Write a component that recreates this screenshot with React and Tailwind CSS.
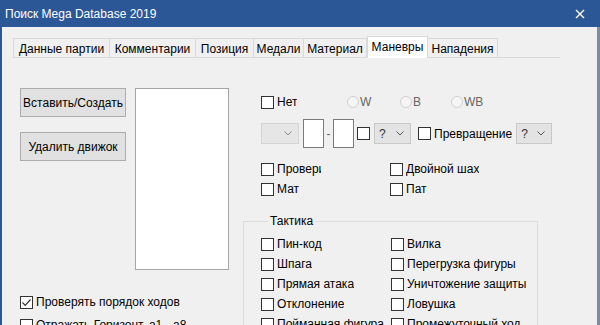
import clsx from 'clsx'

const tabs = [
  { label: 'Данные партии', w: 'w-[97px]' },
  { label: 'Комментарии', w: 'w-[87px]' },
  { label: 'Позиция', w: 'w-[59px]' },
  { label: 'Медали', w: 'w-[51px]' },
  { label: 'Материал', w: 'w-[64px]' },
  { label: 'Маневры', w: 'w-[61px]', active: true },
  { label: 'Нападения', w: 'w-[71px]' },
]

const tactics = [
  ['Пин-код', 'Вилка'],
  ['Шпага', 'Перегрузка фигуры'],
  ['Прямая атака', 'Уничтожение защиты'],
  ['Отклонение', 'Ловушка'],
  ['Пойманная фигура', 'Промежуточный ход'],
]

function Box({ checked }) {
  return (
    <span className="flex h-[13px] w-[13px] shrink-0 items-center justify-center border border-[#333333] bg-white">
      {checked && (
        <svg width="11" height="11" viewBox="0 0 11 11">
          <path d="M1.5 5.5 L4.2 8.3 L9.5 2.5" fill="none" stroke="#333" strokeWidth="1.2" />
        </svg>
      )}
    </span>
  )
}

function Check({ label, checked, className, labelClass }) {
  return (
    <div className={clsx('flex h-[20px] items-center', className)}>
      <Box checked={checked} />
      <span className={clsx('ml-[3px] overflow-hidden whitespace-nowrap', labelClass)}>{label}</span>
    </div>
  )
}

function Radio({ label, className }) {
  return (
    <div className={clsx('flex h-[20px] items-center', className)}>
      <span className="h-[12px] w-[12px] rounded-full border border-[#d2d2d2] bg-[#f5f5f5]" />
      <span className="ml-[1px] text-[#666666]">{label}</span>
    </div>
  )
}

function Chevron({ color = '#333' }) {
  return (
    <svg width="8" height="5" viewBox="0 0 8 5">
      <path d="M0.5 0.5 L4 4 L7.5 0.5" fill="none" stroke={color} strokeWidth="1" />
    </svg>
  )
}

function Combo({ value, disabled, className }) {
  return (
    <div
      className={clsx(
        'flex h-[21px] items-center justify-between border pl-[4px] pr-[6px]',
        disabled ? 'border-[#d4d4d4] bg-[#e6e6e6]' : 'border-[#c8c8c8] bg-[#e3e3e3]',
        className
      )}
    >
      <span className="text-[#333]">{value}</span>
      <Chevron color={disabled ? '#8a8a8a' : '#555'} />
    </div>
  )
}

export default function App() {
  return (
    <div className="flex h-[325px] w-[600px] flex-col overflow-hidden bg-[#f0f0f0] font-['Liberation_Sans',Arial,sans-serif] text-[12px] leading-[16px] text-black">
      {/* Заголовок окна */}
      <div className="flex h-[27px] shrink-0 items-center justify-between bg-[#2b5797] pl-[5px] pr-[15px] text-white">
        <span>Поиск Mega Database 2019</span>
        <svg width="10" height="10" viewBox="0 0 10 10">
          <path d="M1 1 L9 9 M9 1 L1 9" stroke="#fff" strokeWidth="1.4" />
        </svg>
      </div>

      <div className="flex-1 border-l-2 border-r-[3px] border-l-[#2b5797] border-r-[#7b8ca5] pl-[11px] pt-[9px]">
        {/* Вкладки */}
        <div className="flex h-[22px] w-[547px] items-end">
          {tabs.map((t) => (
            <div
              key={t.label}
              className={clsx(
                'flex items-center justify-center border border-[#d9d9d9] whitespace-nowrap',
                t.w,
                t.active ? 'h-[22px] border-b-white bg-white' : 'h-[20px] -ml-px first:ml-0 bg-[#f0f0f0] pt-[1px]'
              )}
            >
              {t.label}
            </div>
          ))}
          <div className="flex-1 border-b border-[#d9d9d9]" />
        </div>

        <div className="flex">
          {/* Левая колонка */}
          <div className="w-[230px] shrink-0 pl-[7px] pt-[30px]">
            <div className="flex gap-[9px]">
              <div className="flex w-[106px] flex-col gap-[15px]">
                <button className="h-[29px] border border-[#adadad] bg-[#e1e1e1]">Вставить/Создать</button>
                <button className="h-[29px] border border-[#adadad] bg-[#e1e1e1]">Удалить движок</button>
              </div>
              <div className="h-[182px] w-[94px] border border-[#a5a5a5] bg-white" />
            </div>
            <div className="mt-[22px] flex flex-col gap-[3px]">
              <Check label="Проверять порядок ходов" checked />
              <Check label="Отражать Горизонт. а1 - а8" />
            </div>
          </div>

          {/* Правая колонка */}
          <div className="pt-[34px]">
            <div className="pl-[18px]">
              <div className="flex h-[20px] items-center">
                <Check label="Нет" className="w-[86px]" />
                <Radio label="W" className="w-[53px]" />
                <Radio label="B" className="w-[51px]" />
                <Radio label="WB" />
              </div>

              <div className="mt-[7px] flex h-[29px] items-center">
                <Combo disabled className="w-[38px]" />
                <div className="ml-[4px] h-[29px] w-[21px] border border-[#7a7a7a] bg-white" />
                <span className="w-[9px] text-center text-[#666]">-</span>
                <div className="h-[29px] w-[21px] border border-[#7a7a7a] bg-white" />
                <span className="ml-[3px]"><Box /></span>
                <Combo value="?" className="ml-[4px] w-[37px]" />
                <Check label="Превращение" className="ml-[7px]" />
                <Combo value="?" className="ml-[4px] w-[36px]" />
              </div>

              <div className="mt-[11px] flex">
                <Check label="Проверить шах" className="w-[129px]" labelClass="w-[44px]" />
                <Check label="Двойной шах" />
              </div>
              <div className="flex">
                <Check label="Мат" className="w-[129px]" />
                <Check label="Пат" />
              </div>
            </div>

            {/* Тактика */}
            <fieldset className="mt-[14px] w-[295px] border border-[#dcdcdc] pb-[10px] pl-[17px] pt-[5px]">
              <legend className="ml-[7px] px-[2px]">Тактика</legend>
              <div className="grid grid-cols-[130px_1fr]">
                {tactics.map(([a, b]) => (
                  <div key={a} className="contents">
                    <Check label={a} />
                    <Check label={b} labelClass="w-[122px]" />
                  </div>
                ))}
              </div>
            </fieldset>
          </div>
        </div>
      </div>
    </div>
  )
}
